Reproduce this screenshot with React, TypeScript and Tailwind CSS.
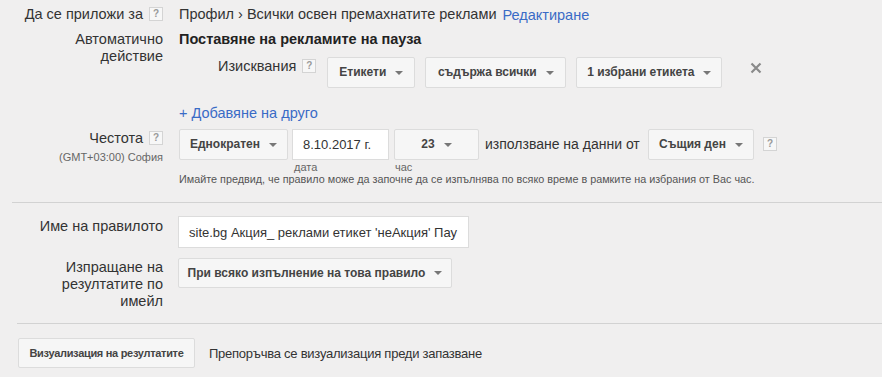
import React from "react";

const Help = ({ className = "" }: { className?: string }) => (
  <span
    className={`inline-flex items-center justify-center w-[14px] h-[14px] border border-[#d4d4d4] bg-[#f7f7f7] text-[10px] leading-none text-[#9a9a9a] font-bold ${className}`}
  >
    ?
  </span>
);

const Caret = () => (
  <svg width="8" height="4" viewBox="0 0 8 4" className="ml-[9px] shrink-0">
    <path d="M0 0 L8 0 L4 4 Z" fill="#777" />
  </svg>
);

const Btn = ({
  children,
  className = "",
  size = "text-[12px]",
  h = "h-[31px]",
}: {
  children: React.ReactNode;
  className?: string;
  size?: string;
  h?: string;
}) => (
  <div
    className={`flex items-center justify-center border border-[#dcdcdc] rounded-[2px] bg-[#f6f6f6] font-bold text-[#444] whitespace-nowrap ${size} ${h} ${className}`}
  >
    {children}
  </div>
);

export default function App() {
  return (
    <div className="w-[882px] h-[377px] overflow-hidden bg-[#f0efef] text-[14.5px] leading-[17px] text-[#333] font-['Liberation_Sans',Arial,sans-serif]">
      {/* Row 1 */}
      <div className="flex pt-[6px]">
        <div className="w-[163px] flex justify-end items-start">
          <span>Да се приложи за</span>
          <Help className="ml-[6px] mt-[1px]" />
        </div>
        <div className="ml-[16px] flex items-start">
          <span>Профил › Всички освен премахнатите реклами</span>
          <span className="ml-[6px] mt-[1px] text-[#3a6bc6]">Редактиране</span>
        </div>
      </div>

      {/* Automatic action */}
      <div className="flex mt-[7px]">
        <div className="w-[163px] text-right">
          Автоматично
          <br />
          действие
        </div>
        <div className="ml-[16px]">
          <div className="font-bold text-[#222]">Поставяне на рекламите на пауза</div>
          <div className="flex items-start mt-[9px] ml-[39px]">
            <div className="flex items-start pt-[1px]">
              <span>Изисквания</span>
              <Help className="ml-[6px] mt-[1px]" />
            </div>
            <Btn className="ml-[11px] w-[88px]">
              Етикети
              <Caret />
            </Btn>
            <Btn className="ml-[10px] w-[141px]">
              съдържа всички
              <Caret />
            </Btn>
            <Btn className="ml-[10px] w-[146px]">
              1 избрани етикета
              <Caret />
            </Btn>
            <svg width="12" height="12" viewBox="0 0 12 12" className="ml-[28px] mt-[5px]">
              <path d="M1.5 1.5 L10.5 10.5 M10.5 1.5 L1.5 10.5" stroke="#8a8a8a" strokeWidth="2.2" />
            </svg>
          </div>
          <div className="mt-[17px] text-[#3a6bc6]">+ Добавяне на друго</div>
        </div>
      </div>

      {/* Frequency */}
      <div className="flex mt-[7px]">
        <div className="w-[163px] flex flex-col items-end">
          <div className="flex items-start pt-[1px]">
            <span>Честота</span>
            <Help className="ml-[6px] mt-[1px]" />
          </div>
          <div className="text-[11px] leading-[14px] text-[#666] mt-[3px]">(GMT+03:00) София</div>
        </div>
        <div className="ml-[16px]">
          <div className="flex items-start">
            <Btn className="w-[109px]">
              Еднократен
              <Caret />
            </Btn>
            <div className="ml-[4px] flex flex-col">
              <div className="w-[97px] h-[31px] border border-[#dcdcdc] bg-white flex items-center pl-[10px] text-[13px]">8.10.2017 г.</div>
              <div className="text-[11px] leading-[13px] text-[#666] mt-[1px] pl-[2px]">дата</div>
            </div>
            <div className="ml-[5px] flex flex-col">
              <Btn className="w-[85px]">
                23
                <Caret />
              </Btn>
              <div className="text-[11px] leading-[13px] text-[#666] mt-[1px] pl-[1px]">час</div>
            </div>
            <span className="ml-[6px] mt-[7px] w-[157px] whitespace-nowrap text-[14px]">използване на данни от</span>
            <Btn className="ml-[6px] w-[106px]">
              Същия ден
              <Caret />
            </Btn>
            <Help className="ml-[9px] mt-[8px]" />
          </div>
          <div className="text-[10.8px] leading-[13px] text-[#555] mt-[-1px]">
            Имайте предвид, че правило може да започне да се изпълнява по всяко време в рамките на избрания от Вас час.
          </div>
        </div>
      </div>

      {/* Divider */}
      <div className="ml-[12px] mt-[16px] h-px bg-[#d2d2d2]" />

      {/* Rule name */}
      <div className="flex mt-[13px]">
        <div className="w-[163px] text-right pt-[2px]">Име на правилото</div>
        <div className="ml-[15px] w-[291px] h-[32px] border border-[#dcdcdc] bg-white flex items-center pl-[10px] overflow-hidden whitespace-nowrap text-[13px]">
          site.bg Акция_ реклами етикет 'неАкция' Пау
        </div>
      </div>

      {/* Email */}
      <div className="flex mt-[10px]">
        <div className="w-[163px] text-right pt-[1px]">
          Изпращане на
          <br />
          резултатите по
          <br />
          имейл
        </div>
        <Btn className="ml-[15px] w-[274px]" h="h-[30px]">
          При всяко изпълнение на това правило
          <Caret />
        </Btn>
      </div>

      {/* Divider */}
      <div className="ml-[17px] mt-[13px] h-px bg-[#d2d2d2]" />

      {/* Bottom */}
      <div className="flex items-center mt-[14px] ml-[18px]">
        <Btn className="w-[177px] tracking-[-0.3px]" h="h-[30px]" size="text-[11px]">
          Визуализация на резултатите
        </Btn>
        <span className="ml-[14px] text-[13px] tracking-[-0.25px]">Препоръчва се визуализация преди запазване</span>
      </div>
    </div>
  );
}
